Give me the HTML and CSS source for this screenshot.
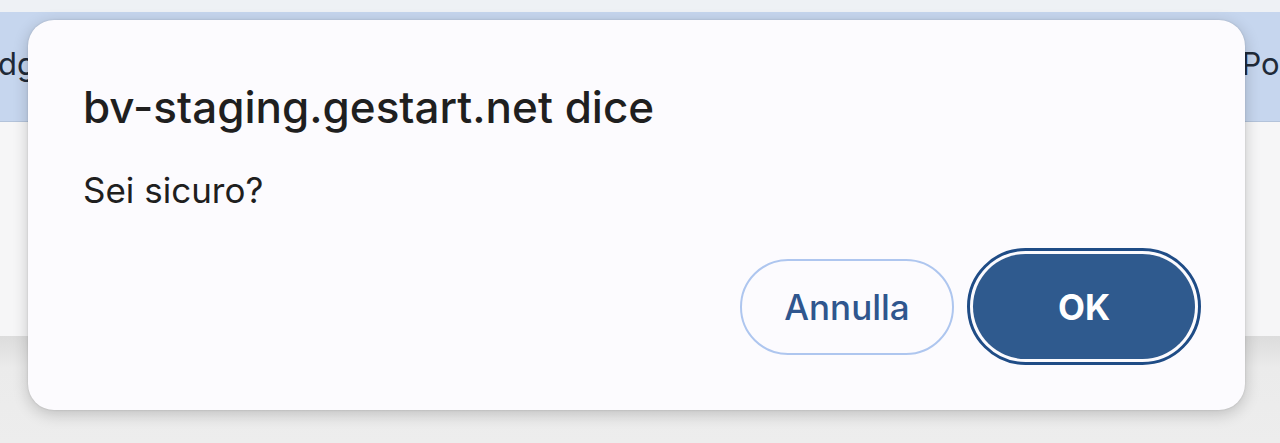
FILE: index.html
```html
<!DOCTYPE html>
<html lang="it">
<head>
<meta charset="utf-8">
<title>Conferma</title>
<link rel="stylesheet" href="styles.css">
</head>
<body>
<div class="page">
  <div class="topstrip"></div>
  <div class="header-band">
    <span class="col-left">dg</span>
    <span class="col-right">Pos</span>
  </div>
  <div class="content-area"></div>
  <div class="footer-area"></div>
</div>
<div class="dialog" role="dialog">
  <h1 class="dialog-title">bv-staging.gestart.net dice</h1>
  <p class="dialog-message">Sei sicuro?</p>
  <div class="dialog-actions">
    <button class="btn btn-cancel">Annulla</button>
    <span class="focus-ring"><button class="btn btn-ok">OK</button></span>
  </div>
</div>
</body>
</html>
```

FILE: styles.css
```css
html, body {
  margin: 0;
  padding: 0;
  width: 1280px;
  height: 443px;
  overflow: hidden;
  font-family: Inter, Roboto, "Liberation Sans", Arial, sans-serif;
}
.page {
  display: flex;
  flex-direction: column;
  height: 443px;
}
.topstrip {
  height: 12px;
  background: #eef1f5;
}
.header-band {
  height: 110px;
  background: #c6d6ee;
  border-bottom: 1px solid #b3c3da;
  display: flex;
  align-items: center;
  justify-content: space-between;
  font-size: 31px;
  color: #1f2a38;
  overflow: hidden;
  padding-bottom: 6px;
  box-sizing: border-box;
}
.col-left {
  margin-left: -2px;
}
.col-right {
  margin-right: -16px;
}
.content-area {
  height: 214px;
  background: #f6f6f7;
}
.footer-area {
  flex: 1;
  background: linear-gradient(#dcdcdc, #ebebeb 30%, #ededed);
}
.dialog {
  position: absolute;
  left: 28px;
  top: 20px;
  width: 1217px;
  height: 390px;
  box-sizing: border-box;
  background: #fcfbfe;
  border-radius: 26px;
  box-shadow: 0 4px 16px rgba(0,0,0,0.2), 0 0 2px rgba(0,0,0,0.15);
  padding: 62px 44px 0 55px;
  display: flex;
  flex-direction: column;
}
.dialog-title {
  margin: 0;
  font-size: 44px;
  font-weight: 500;
  color: #1f1f1f;
  line-height: 50px;
  letter-spacing: 0;
}
.dialog-message {
  margin: 38px 0 0;
  font-size: 35px;
  font-weight: 400;
  color: #1f1f1f;
  line-height: 40px;
}
.dialog-actions {
  margin-top: 38px;
  display: flex;
  justify-content: flex-end;
  align-items: center;
  gap: 13px;
}
.btn {
  font-family: Inter, Roboto, "Liberation Sans", Arial, sans-serif;
  font-size: 35px;
  font-weight: 500;
  height: 96px;
  border-radius: 48px;
  cursor: pointer;
  box-sizing: border-box;
}
.btn-cancel {
  width: 214px;
  background: transparent;
  border: 2px solid #aec6ef;
  color: #2f568e;
}
.focus-ring {
  display: inline-flex;
  padding: 3px;
  border: 3px solid #1f4c86;
  border-radius: 60px;
  background: #fcfbfe;
}
.btn-ok {
  width: 222px;
  background: #2f5a8e;
  border: none;
  color: #ffffff;
  font-weight: 700;
  height: 105px;
  border-radius: 53px;
}
```
